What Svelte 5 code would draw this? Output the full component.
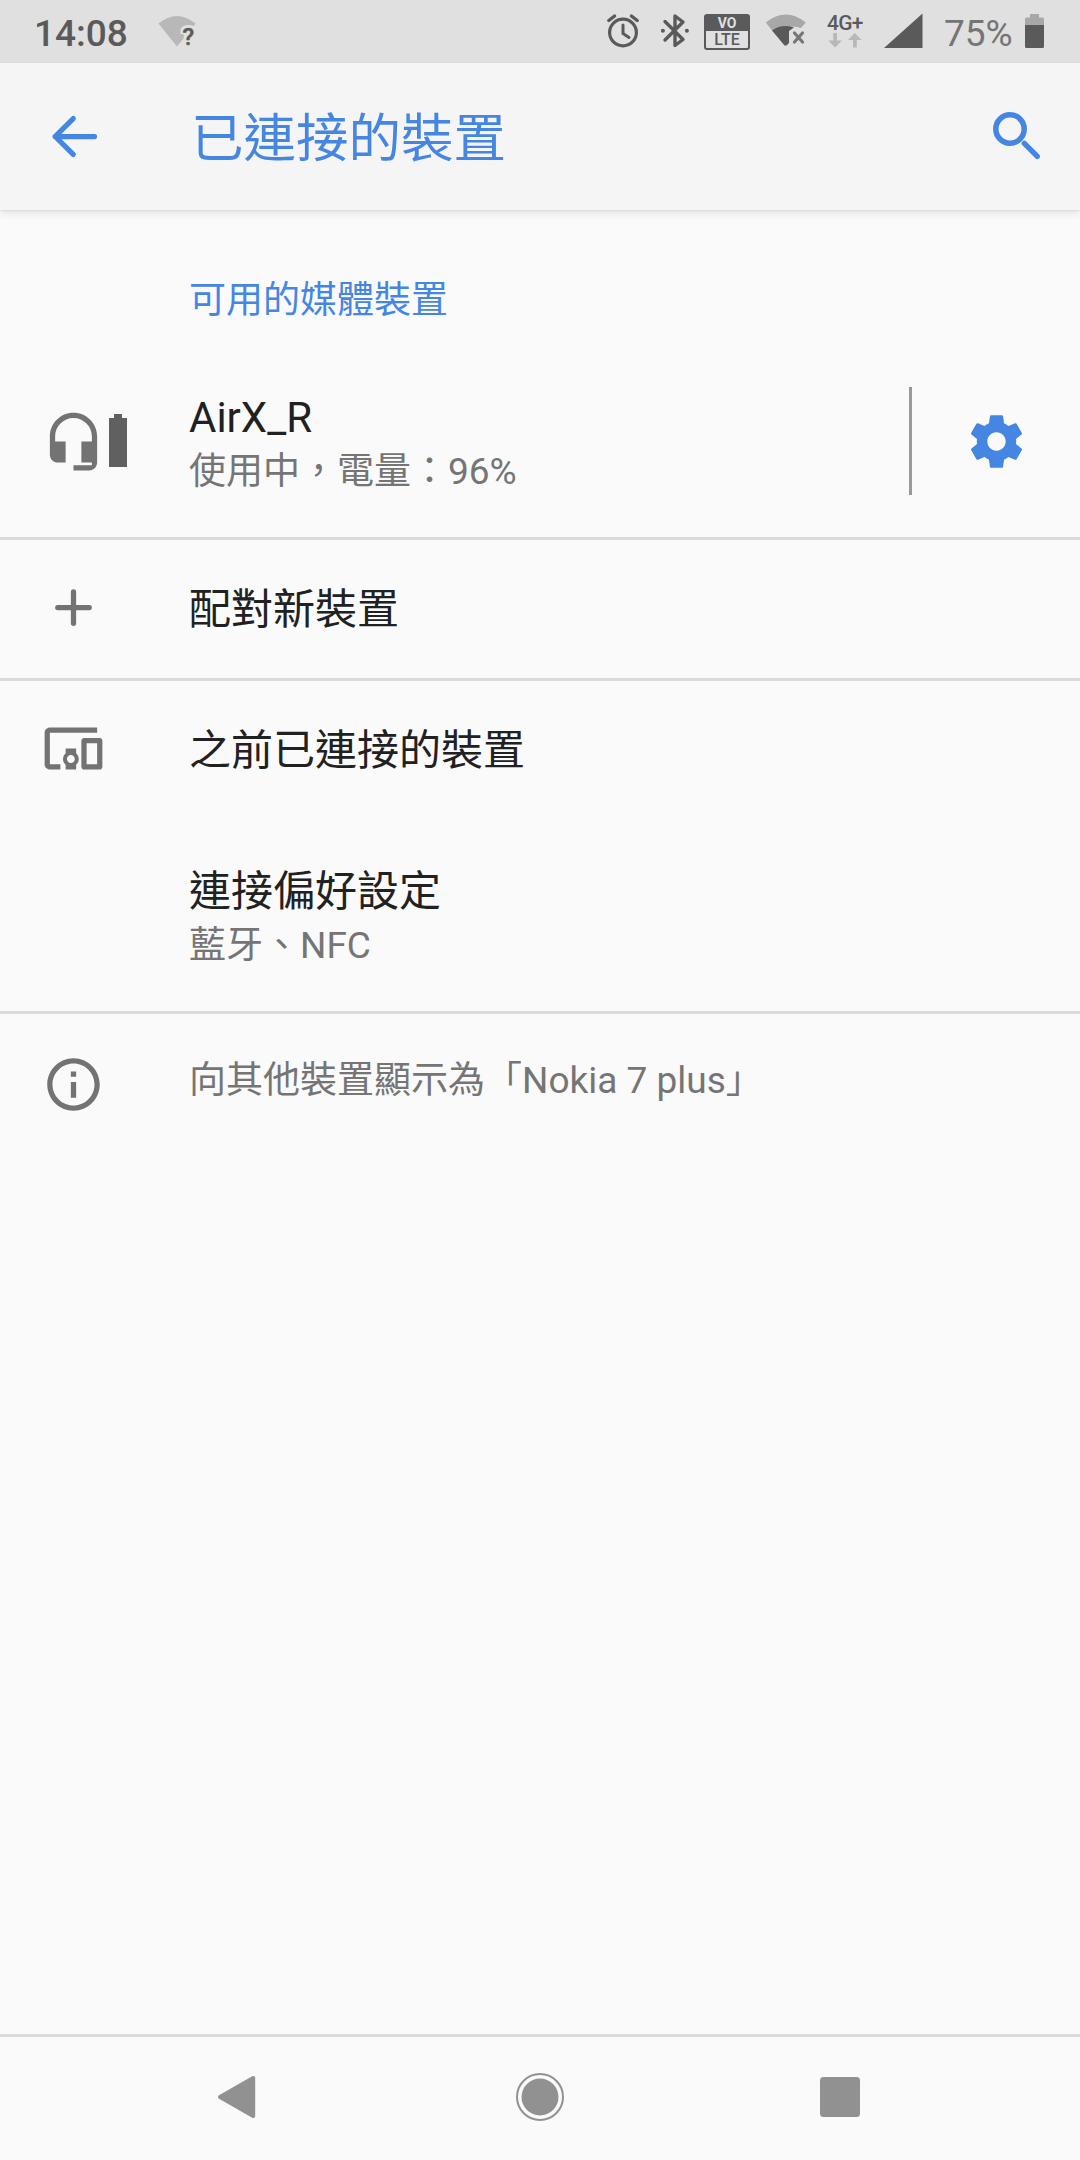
<script>
  const volte = ["VO", "LTE"];

  const device = {
    name: "AirX_R",
    summary: "使用中，電量：96%",
  };
</script>

<div class="screen">
  <header class="status">
    <span class="clock">14:08</span>
    <svg class="wifi-unknown" width="42" height="63" viewBox="0 0 42 63">
      <path d="M2.5 23.5 Q21 8.500 39.500 23.500 L38 26 Q28 23 24.500 29 L24.500 34 L28 34.500 L27.500 38.500 L21 46.500 Z" fill="#b8b8b8" />
      <text x="26.500" y="45" font-size="24" font-weight="500" fill="#5a5a5a" stroke="#5a5a5a" stroke-width=".5">?</text>
    </svg>

    <div class="indicators">
      <svg class="alarm" width="34" height="63" viewBox="0 0 34 63" fill="none" stroke="#5a5a5a">
        <circle cx="17" cy="32.500" r="13.400" stroke-width="3.200" />
        <path d="M17 25v8.500l6 4" stroke-width="3" stroke-linecap="round" />
        <path d="M2.800 20.500l5.800-4.500M31.200 20.500l-5.800-4.500" stroke-width="3.400" stroke-linecap="round" />
      </svg>
      <svg class="bluetooth" width="30" height="63" viewBox="0 0 30 63">
        <path d="M5 21.500l18 18-8 6V16l8 6-18 18" fill="none" stroke="#5a5a5a" stroke-width="3.400" stroke-linecap="round" stroke-linejoin="round" />
        <circle cx="2.900" cy="30.800" r="2" fill="#5a5a5a" />
        <circle cx="26.900" cy="30.800" r="2" fill="#5a5a5a" />
      </svg>
      <div class="volte">
        {#each volte as part}
          <span>{part}</span>
        {/each}
      </div>
      <svg class="wifi" width="42" height="63" viewBox="0 0 42 63">
        <path d="M.8 22.500Q21 6.500 40.800 22.500L36 28Q21 24 8 31.500Z" fill="#a8a8a8" />
        <path d="M7 30.500Q17 23.500 29 27.500L24 31V43L21.500 45.500H19.500Z" fill="#5a5a5a" />
        <path d="M29.500 33l8 9M37.500 33l-8 9" stroke="#777" stroke-width="3.200" stroke-linecap="round" />
      </svg>
      <div class="network">
        <span>4G+</span>
        <svg width="36" height="16" viewBox="0 0 36 16">
          <path d="M6.200 0h3.800v7.500h5L8.100 14.500 1.200 7.500h5z" />
          <path d="M27.800 0l7 7h-5v7.500H26V7h-5z" />
        </svg>
      </div>
      <svg class="signal" width="39" height="63" viewBox="0 0 39 63">
        <path d="M38.500 13.500V48H0z" fill="#5a5a5a" />
      </svg>
      <span class="percent">75%</span>
      <svg class="battery" width="20" height="63" viewBox="0 0 20 63">
        <path d="M0 25v-6q0-1.500 1.500-1.500H5V14h9v3.500h3.500q1.500 0 1.500 1.500v6z" fill="#a8a8a8" />
        <path d="M0 25h19v21.500q0 1.500-1.500 1.500h-16Q0 48 0 46.500z" fill="#5a5a5a" />
      </svg>
    </div>
  </header>

  <div class="appbar">
    <svg class="back" width="63" height="63" viewBox="0 0 24 24">
      <path d="M20 12H5M11.900 5.200L5 12l6.900 6.800" fill="none" stroke="currentColor" stroke-width="2" stroke-linecap="round" stroke-linejoin="round" />
    </svg>
    <h1>已連接的裝置</h1>
    <svg class="search" width="63" height="63" viewBox="0 0 63 63" fill="none" stroke="currentColor">
      <circle cx="25" cy="24" r="14.200" stroke-width="5.500" />
      <path d="M39.300 38.300l13 13" stroke-width="5.400" stroke-linecap="round" />
    </svg>
  </div>

  <main>
    <h2>可用的媒體裝置</h2>

    <div class="row tall">
      <div class="icon">
        <svg width="63" height="63" viewBox="0 0 24 24">
          <path d="M12 1c-4.970 0-9 4.030-9 9v7c0 1.660 1.340 3 3 3h3v-8H5v-2c0-3.870 3.130-7 7-7s7 3.130 7 7v2h-4v8h4v1h-7v2h6c1.660 0 3-1.340 3-3V10c0-4.970-4.030-9-9-9z" />
        </svg>
        <svg class="level" width="18" height="54" viewBox="0 0 18 54">
          <path d="M5 0h8v4h5v49H0V4h5z" />
        </svg>
      </div>
      <div class="text">
        <span class="title">{device.name}</span>
        <span class="summary">{device.summary}</span>
      </div>
      <div class="settings">
        <svg width="63" height="63" viewBox="0 0 24 24">
          <path d="M19.430 12.980c.04-.32.070-.64.070-.98s-.03-.66-.07-.98l2.110-1.650c.19-.15.24-.42.12-.64l-2-3.460c-.12-.22-.39-.3-.61-.22l-2.490 1c-.52-.4-1.080-.73-1.690-.98l-.38-2.650C14.460 2.180 14.250 2 14 2h-4c-.25 0-.46.18-.49.42l-.38 2.650c-.61.25-1.170.59-1.690.98l-2.490-1c-.23-.09-.49 0-.61.22l-2 3.460c-.13.22-.07.49.12.64l2.110 1.650c-.04.32-.07.65-.07.98s.03.66.07.98l-2.110 1.650c-.19.15-.24.42-.12.64l2 3.460c.12.22.39.3.61.22l2.490-1c.52.4 1.080.73 1.690.98l.38 2.650c.03.24.24.42.49.42h4c.25 0 .46-.18.49-.42l.38-2.650c.61-.25 1.170-.59 1.690-.98l2.490 1c.23.09.49 0 .61-.22l2-3.460c.12-.22.07-.49-.12-.64l-2.110-1.650zM12 15.500c-1.930 0-3.500-1.570-3.500-3.500s1.570-3.500 3.500-3.500 3.500 1.570 3.500 3.500-1.570 3.500-3.500 3.500z" />
        </svg>
      </div>
    </div>

    <div class="row divided">
      <div class="icon">
        <svg width="63" height="63" viewBox="0 0 24 24">
          <path d="M12 6v12M6 12h12" fill="none" stroke="currentColor" stroke-width="2" stroke-linecap="round" />
        </svg>
      </div>
      <div class="text">
        <span class="title">配對新裝置</span>
      </div>
    </div>

    <div class="row divided">
      <div class="icon">
        <svg width="63" height="63" viewBox="0 0 24 24">
          <path d="M3 6h18V4H3c-1.100 0-2 .9-2 2v12c0 1.100.9 2 2 2h4v-2H3V6zm10 6H9v1.780c-.61.55-1 1.330-1 2.220s.39 1.670 1 2.220V20h4v-1.780c.61-.55 1-1.340 1-2.220s-.39-1.670-1-2.220V12zm-2 5.500c-.83 0-1.500-.67-1.500-1.500s.67-1.500 1.500-1.500 1.500.67 1.500 1.500-.67 1.500-1.500 1.500zM22 8h-6c-.5 0-1 .5-1 1v10c0 .5.5 1 1 1h6c.5 0 1-.5 1-1V9c0-.5-.5-1-1-1zm-1 10h-4v-8h4v8z" />
        </svg>
      </div>
      <div class="text">
        <span class="title">之前已連接的裝置</span>
      </div>
    </div>

    <div class="row tall">
      <div class="icon"></div>
      <div class="text">
        <span class="title">連接偏好設定</span>
        <span class="summary">藍牙、NFC</span>
      </div>
    </div>

    <div class="row divided footer">
      <div class="icon">
        <svg width="63" height="63" viewBox="0 0 24 24">
          <path d="M11 17h2v-6h-2v6zm1-15C6.480 2 2 6.480 2 12s4.480 10 10 10 10-4.480 10-10S17.520 2 12 2zm0 18c-4.410 0-8-3.590-8-8s3.590-8 8-8 8 3.590 8 8-3.590 8-8 8zM11 9h2V7h-2v2z" />
        </svg>
      </div>
      <div class="text">
        <span class="summary">向其他裝置顯示為「Nokia 7 plus」</span>
      </div>
    </div>
  </main>

  <nav>
    <svg width="48" height="48" viewBox="0 0 48 48">
      <path d="M37.200 5v38L4 24z" stroke="currentColor" stroke-width="4" stroke-linejoin="round" />
    </svg>
    <svg width="48" height="48" viewBox="0 0 48 48">
      <circle cx="24" cy="24" r="23" fill="none" stroke="currentColor" stroke-width="2" />
      <circle cx="24" cy="24" r="18.500" />
    </svg>
    <svg width="48" height="48" viewBox="0 0 48 48">
      <rect x="4" y="4" width="40" height="40" rx="3.500" />
    </svg>
  </nav>
</div>

<style>
  :global(body) {
    background: #fafafa;
  }
  .screen {
    display: flex;
    flex-direction: column;
    width: 1080px;
    height: 2160px;
    overflow: hidden;
    background: #fafafa;
    color: #212121;
    font-family: Roboto, "Noto Sans CJK TC", sans-serif;
  }
  svg {
    display: block;
    flex: none;
    fill: currentColor;
  }
  svg[fill="none"] {
    fill: none;
  }

  .status {
    display: flex;
    align-items: center;
    height: 63px;
    padding: 0 35px 0 34px;
    background: #e0e0e0;
    color: #5a5a5a;
  }
  .clock {
    box-sizing: border-box;
    width: 122px;
    height: 63px;
    padding-top: 2px;
    font-size: 37px;
    font-weight: 500;
    line-height: 63px;
  }
  .indicators {
    display: flex;
    align-items: center;
    height: 63px;
    margin-left: auto;
  }
  .bluetooth {
    margin-left: 20px;
  }
  .volte {
    display: flex;
    flex-direction: column;
    box-sizing: border-box;
    width: 46px;
    height: 36px;
    margin-left: 14px;
    border: 2px solid #5a5a5a;
    border-radius: 3px;
    font-size: 16px;
    font-weight: 500;
    line-height: 18px;
    text-align: center;
  }
  .volte span:first-child {
    height: 15px;
    background: #5a5a5a;
    color: #e0e0e0;
    font-size: 14px;
    font-weight: 700;
    line-height: 15px;
  }
  .wifi {
    margin-left: 15px;
  }
  .network {
    display: flex;
    flex-direction: column;
    width: 38px;
    height: 35px;
    margin-left: 20px;
    font-size: 21px;
    font-weight: 500;
    line-height: 19px;
    letter-spacing: -0.8px;
  }
  .network span {
    height: 19px;
  }
  .network svg {
    color: #b8b8b8;
  }
  .signal {
    margin-left: 19px;
  }
  .percent {
    box-sizing: border-box;
    width: 81px;
    height: 63px;
    margin-left: 21px;
    padding-top: 2px;
    color: #757575;
    font-size: 37px;
    line-height: 63px;
  }

  .appbar {
    display: flex;
    align-items: center;
    height: 147px;
    background: #f5f5f5;
    box-shadow: 0 1px 2px rgba(0, 0, 0, 0.08), 0 4px 8px rgba(0, 0, 0, 0.08);
    color: #4586e3;
    z-index: 1;
  }
  .back {
    margin-left: 42px;
  }
  h1 {
    flex: 1;
    margin: 0 0 6px 86px;
    font-size: 52.5px;
    font-weight: 400;
  }
  .search {
    margin-right: 32px;
  }

  main {
    flex: 1;
  }
  h2 {
    box-sizing: border-box;
    height: 135px;
    margin: 0 0 0 189px;
    padding-top: 31px;
    color: #4586e3;
    font-size: 37px;
    font-weight: 400;
    line-height: 120px;
  }
  .row {
    display: flex;
    align-items: center;
    height: 141px;
  }
  .tall {
    height: 192px;
  }
  .divided {
    box-shadow: inset 0 3px #dadada;
  }
  .icon {
    display: flex;
    align-items: center;
    box-sizing: border-box;
    width: 189px;
    padding-left: 42px;
    color: #737373;
  }
  .level {
    margin-left: 4px;
    color: #606060;
  }
  .text {
    display: flex;
    flex: 1;
    flex-direction: column;
    padding-top: 4px;
  }
  .tall .text {
    padding-top: 6px;
  }
  .title {
    font-size: 42px;
    line-height: 56px;
  }
  .summary {
    color: #757575;
    font-size: 37px;
    line-height: 52px;
  }
  .settings {
    display: flex;
    align-items: center;
    box-sizing: border-box;
    width: 171px;
    height: 108px;
    padding-left: 53px;
    border-left: 3px solid #999;
    color: #4586e3;
  }
  .footer {
    align-items: flex-start;
    padding-top: 42px;
  }
  .footer .text {
    padding-top: 2px;
  }

  nav {
    display: flex;
    justify-content: center;
    align-items: center;
    gap: 252px;
    box-sizing: border-box;
    height: 126px;
    padding-bottom: 4px;
    border-top: 3px solid #dadada;
    color: #919191;
  }
</style>
